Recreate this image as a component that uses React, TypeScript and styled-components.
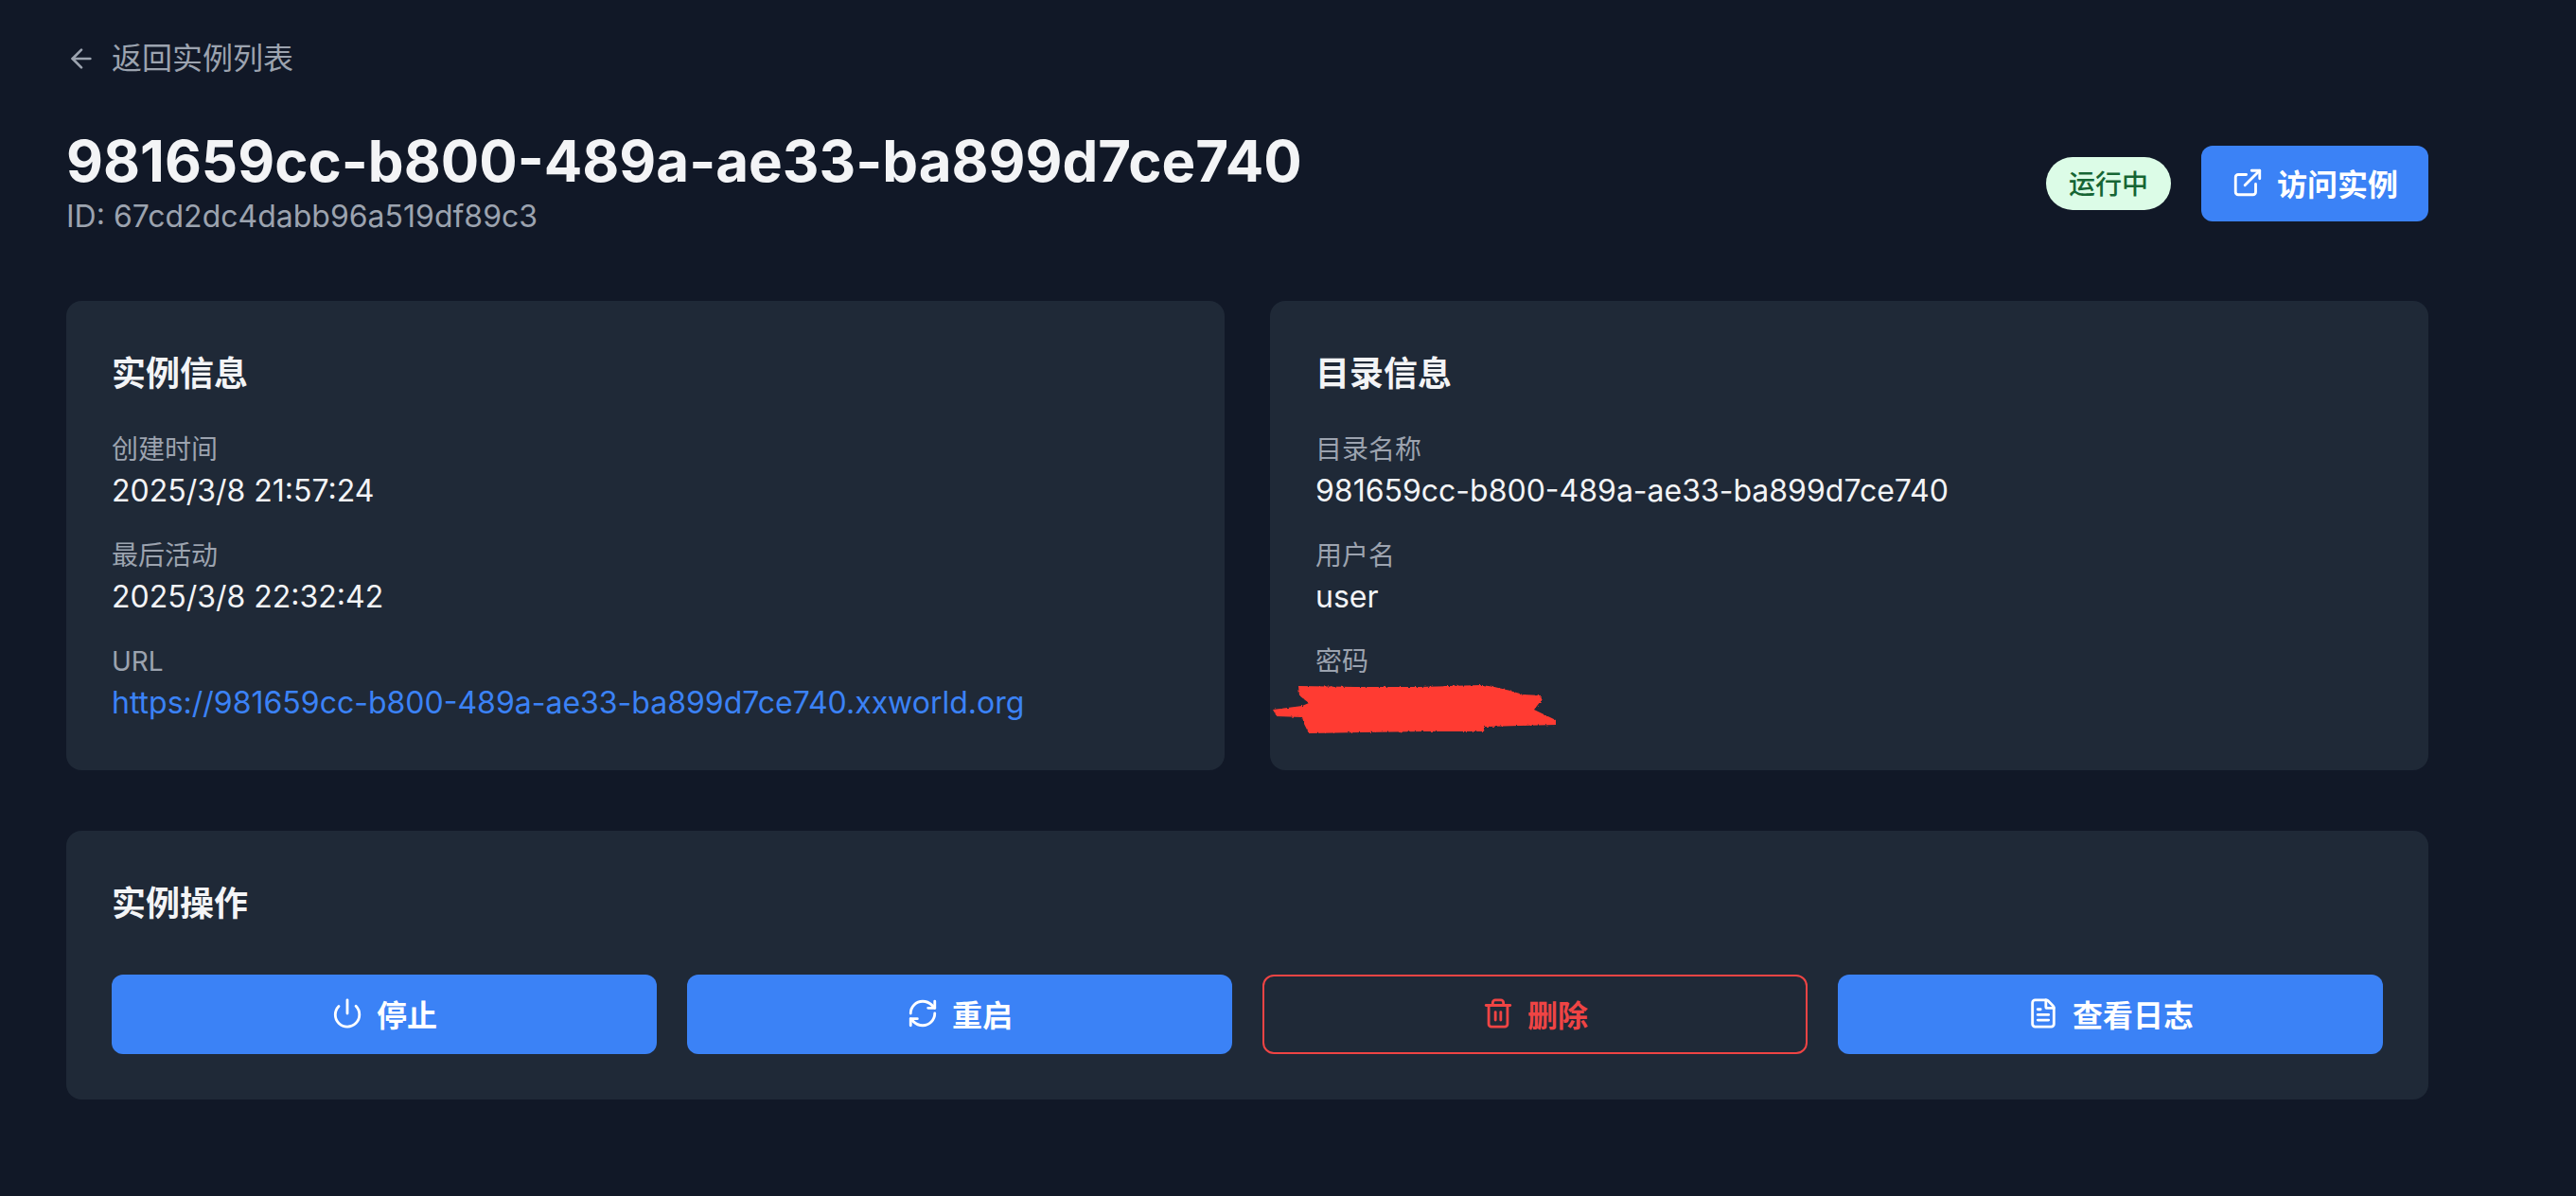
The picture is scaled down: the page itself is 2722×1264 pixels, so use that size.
import React from "react";
import styled, { createGlobalStyle } from "styled-components";
import { ArrowLeft, ExternalLink, Power, RefreshCw, Trash2, FileText } from "lucide-react";

const FONT = `Inter, "Noto Sans CJK SC", sans-serif`;

const Global = createGlobalStyle`
  html, body { margin: 0; padding: 0; background: #111827; }
  * { box-sizing: border-box; }
  body { font-family: ${FONT}; color: #f3f4f6; }
`;

const Page = styled.div`
  min-height: 1264px;
  padding: 37px 0 0 70px;
  width: 2566px;
  display: flex;
  flex-direction: column;
`;

const BackLink = styled.a`
  display: flex;
  align-items: center;
  gap: 16px;
  height: 50px;
  color: #9ca3af;
  font-size: 32px;
  line-height: 50px;
`;

const Header = styled.header`
  display: flex;
  align-items: center;
  justify-content: space-between;
  margin-top: 47px;
`;

const TitleBlock = styled.div`
  display: flex;
  flex-direction: column;
`;

const Title = styled.h1`
  margin: 0;
  font-size: 60px;
  line-height: 72px;
  font-weight: 700;
  color: #f3f4f6;
`;

const SubId = styled.div`
  margin-top: 3px;
  font-size: 32px;
  line-height: 40px;
  color: #9ca3af;
`;

const HeaderActions = styled.div`
  display: flex;
  align-items: center;
  gap: 32px;
  padding-top: 5px;
`;

const Badge = styled.span`
  display: inline-flex;
  align-items: center;
  justify-content: center;
  width: 132px;
  height: 56px;
  padding-bottom: 2px;
  border-radius: 28px;
  background: #dcfce7;
  color: #166534;
  font-size: 28px;
  font-weight: 500;
`;

const VisitButton = styled.button`
  display: inline-flex;
  align-items: center;
  justify-content: center;
  gap: 14px;
  width: 240px;
  height: 80px;
  padding: 0 0 2px;
  border: 0;
  border-radius: 12px;
  background: #3b82f6;
  color: #fff;
  font-family: ${FONT};
  font-size: 32px;
  font-weight: 700;
`;

const InfoGrid = styled.div`
  display: grid;
  grid-template-columns: 1fr 1fr;
  gap: 48px;
  margin-top: 69px;
`;

const Card = styled.section`
  background: #1f2937;
  border-radius: 16px;
  padding: 48px;
`;

const InfoCard = styled(Card)`
  padding-bottom: 47px;
`;

const CardTitle = styled.h2<{ $spacing: number }>`
  margin: 0 0 ${(p) => p.$spacing}px;
  font-size: 36px;
  line-height: 59px;
  font-weight: 700;
  color: #f3f4f6;
`;

const Fields = styled.div`
  display: flex;
  flex-direction: column;
  gap: 24px;
`;

const Field = styled.div`
  position: relative;
  display: flex;
  flex-direction: column;
`;

const Label = styled.div`
  font-size: 28px;
  line-height: 40px;
  color: #9ca3af;
`;

const Value = styled.div`
  font-size: 32px;
  line-height: 48px;
  color: #f3f4f6;
`;

const LinkValue = styled(Value)`
  color: #3b82f6;
`;

const Scribble = styled.svg`
  position: absolute;
  left: -45px;
  top: 45px;
  width: 302px;
  height: 53px;
  overflow: visible;
`;

const ActionsCard = styled(Card)`
  margin-top: 64px;
`;

const ActionGrid = styled.div`
  display: grid;
  grid-template-columns: repeat(4, 1fr);
  gap: 32px;
`;

const ActionButton = styled.button<{ $danger?: boolean }>`
  display: flex;
  align-items: center;
  justify-content: center;
  gap: 14px;
  height: 84px;
  padding: 0 0 2px;
  border-radius: 12px;
  border: ${(p) => (p.$danger ? "2px solid #ef4444" : "0")};
  background: ${(p) => (p.$danger ? "transparent" : "#3b82f6")};
  color: ${(p) => (p.$danger ? "#ef4444" : "#fff")};
  font-family: ${FONT};
  font-size: 32px;
  font-weight: 700;
`;

export default function App() {
  return (
    <>
      <Global />
      <Page>
        <BackLink>
          <ArrowLeft size={32} strokeWidth={2} />
          返回实例列表
        </BackLink>
        <Header>
          <TitleBlock>
            <Title>981659cc-b800-489a-ae33-ba899d7ce740</Title>
            <SubId>ID: 67cd2dc4dabb96a519df89c3</SubId>
          </TitleBlock>
          <HeaderActions>
            <Badge>运行中</Badge>
            <VisitButton>
              <ExternalLink size={34} strokeWidth={2} />
              访问实例
            </VisitButton>
          </HeaderActions>
        </Header>
        <InfoGrid>
          <InfoCard>
            <CardTitle $spacing={30}>实例信息</CardTitle>
            <Fields>
              <Field>
                <Label>创建时间</Label>
                <Value>2025/3/8 21:57:24</Value>
              </Field>
              <Field>
                <Label>最后活动</Label>
                <Value>2025/3/8 22:32:42</Value>
              </Field>
              <Field>
                <Label>URL</Label>
                <LinkValue>https://981659cc-b800-489a-ae33-ba899d7ce740.xxworld.org</LinkValue>
              </Field>
            </Fields>
          </InfoCard>
          <InfoCard>
            <CardTitle $spacing={30}>目录信息</CardTitle>
            <Fields>
              <Field>
                <Label>目录名称</Label>
                <Value>981659cc-b800-489a-ae33-ba899d7ce740</Value>
              </Field>
              <Field>
                <Label>用户名</Label>
                <Value>user</Value>
              </Field>
              <Field>
                <Label>密码</Label>
                <Value>&nbsp;</Value>
                <Scribble viewBox="0 0 302 53">
                  <defs>
                    <filter id="rough" x="-5%" y="-20%" width="110%" height="140%">
                      <feTurbulence type="fractalNoise" baseFrequency="0.35" numOctaves="2" seed="4" />
                      <feDisplacementMap in="SourceGraphic" scale="3" />
                    </filter>
                  </defs>
                  <path
                    filter="url(#rough)"
                    fill="#ff3b30"
                    d="M27 1 L88 2 L154 2 L221 0 L234 2 L251 6 L264 10 L284 11 L283 17 L276 26 L299 37 L299 42 L224 44 L223 49 L161 49 L94 50 L38 51 L33 41 L31 34 L4 33 L0 26 L31 22 L38 19 L28 11 Z"
                  />
                </Scribble>
              </Field>
            </Fields>
          </InfoCard>
        </InfoGrid>
        <ActionsCard>
          <CardTitle $spacing={45}>实例操作</CardTitle>
          <ActionGrid>
            <ActionButton>
              <Power size={34} strokeWidth={2} />
              停止
            </ActionButton>
            <ActionButton>
              <RefreshCw size={34} strokeWidth={2} />
              重启
            </ActionButton>
            <ActionButton $danger>
              <Trash2 size={34} strokeWidth={2} />
              删除
            </ActionButton>
            <ActionButton>
              <FileText size={34} strokeWidth={2} />
              查看日志
            </ActionButton>
          </ActionGrid>
        </ActionsCard>
      </Page>
    </>
  );
}
